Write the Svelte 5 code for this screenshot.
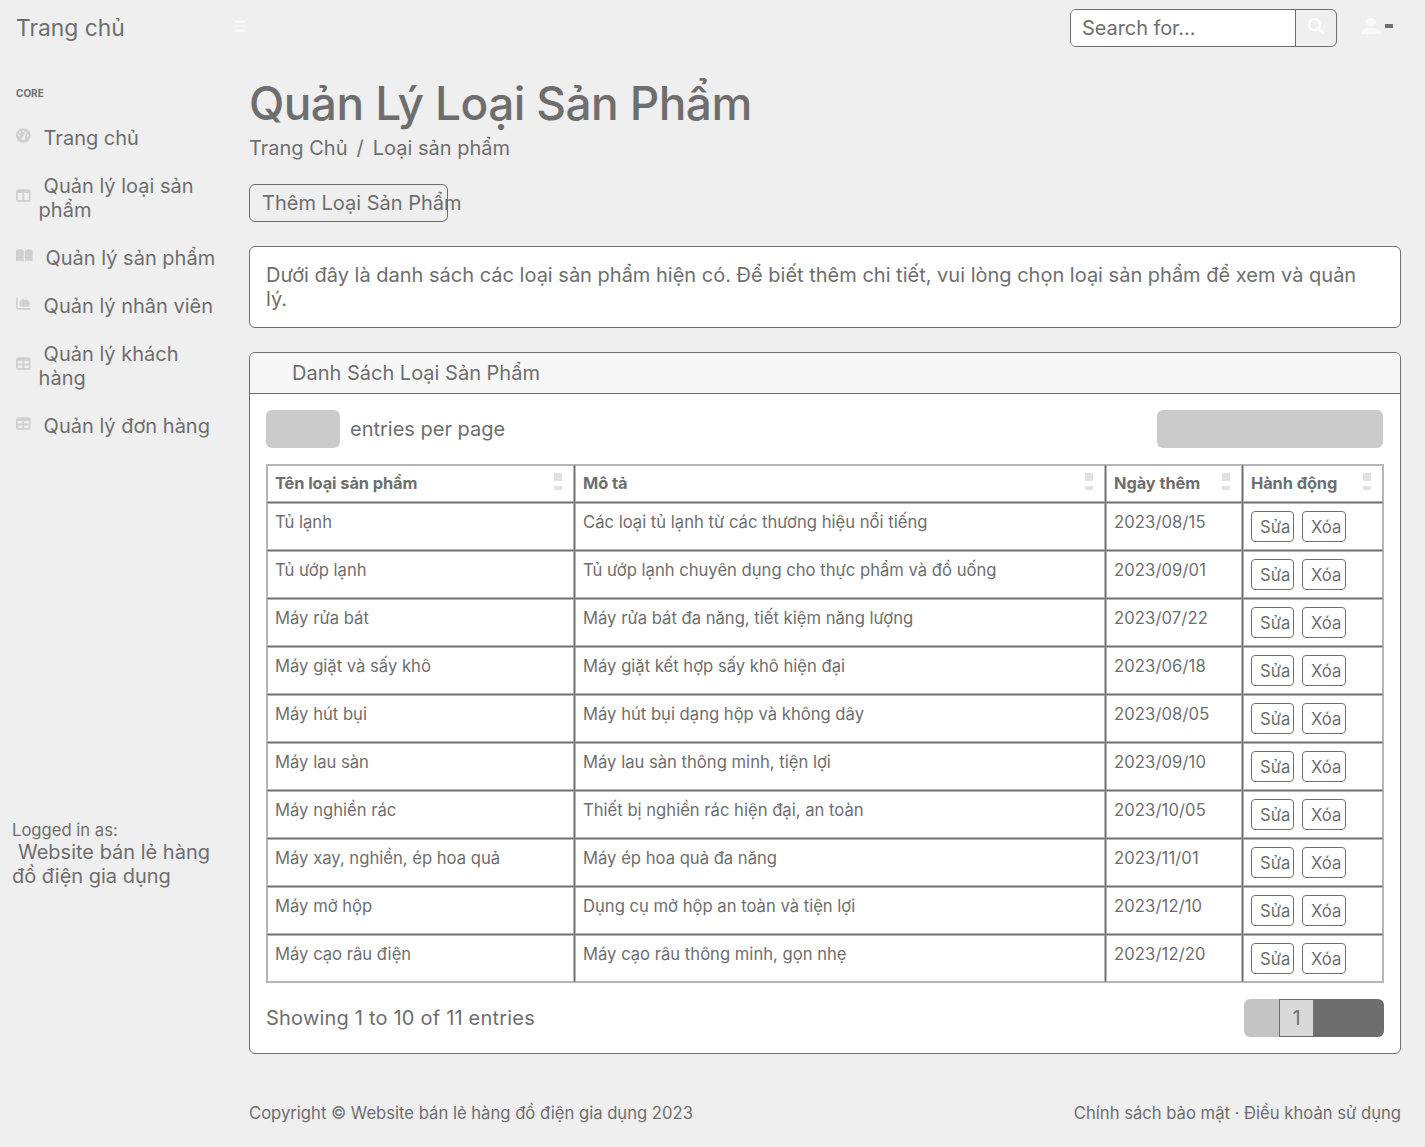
<script>
  const nav = [
    { icon: 'gauge', text: 'Trang chủ' },
    { icon: 'columns', text: 'Quản lý loại sản phẩm', tall: true },
    { icon: 'book', text: 'Quản lý sản phẩm' },
    { icon: 'area', text: 'Quản lý nhân viên' },
    { icon: 'table', text: 'Quản lý khách hàng', tall: true },
    { icon: 'table', text: 'Quản lý đơn hàng' }
  ];
  const heads = ['Tên loại sản phẩm', 'Mô tả', 'Ngày thêm', 'Hành động'];
  const rows = [
    ['Tủ lạnh', 'Các loại tủ lạnh từ các thương hiệu nổi tiếng', '2023/08/15'],
    ['Tủ ướp lạnh', 'Tủ ướp lạnh chuyên dụng cho thực phẩm và đồ uống', '2023/09/01'],
    ['Máy rửa bát', 'Máy rửa bát đa năng, tiết kiệm năng lượng', '2023/07/22'],
    ['Máy giặt và sấy khô', 'Máy giặt kết hợp sấy khô hiện đại', '2023/06/18'],
    ['Máy hút bụi', 'Máy hút bụi dạng hộp và không dây', '2023/08/05'],
    ['Máy lau sàn', 'Máy lau sàn thông minh, tiện lợi', '2023/09/10'],
    ['Máy nghiền rác', 'Thiết bị nghiền rác hiện đại, an toàn', '2023/10/05'],
    ['Máy xay, nghiền, ép hoa quả', 'Máy ép hoa quả đa năng', '2023/11/01'],
    ['Máy mở hộp', 'Dụng cụ mở hộp an toàn và tiện lợi', '2023/12/10'],
    ['Máy cạo râu điện', 'Máy cạo râu thông minh, gọn nhẹ', '2023/12/20']
  ];
</script>

<div class="page">
  <header>
    <a class="brand" href="#top">Trang chủ</a>
    <svg class="bars" viewBox="0 0 448 512"><path d="M0 96c0-18 14-32 32-32h384c18 0 32 14 32 32s-14 32-32 32H32C14 128 0 114 0 96zm0 160c0-18 14-32 32-32h384c18 0 32 14 32 32s-14 32-32 32H32c-18 0-32-14-32-32zm448 160c0 18-14 32-32 32H32c-18 0-32-14-32-32s14-32 32-32h384c18 0 32 14 32 32z" /></svg>
    <div class="search">
      <div class="field">Search for...</div>
      <div class="go"><svg viewBox="0 0 512 512"><path d="M416 208c0 45.9-14.900 88.300-40 122.700L502.600 457.400c12.500 12.500 12.500 32.800 0 45.300s-32.800 12.500-45.300 0L330.700 376c-34.400 25.200-76.800 40-122.700 40C93.100 416 0 322.900 0 208S93.100 0 208 0S416 93.100 416 208zM208 352a144 144 0 1 0 0-288 144 144 0 1 0 0 288z" /></svg></div>
    </div>
    <svg class="user" viewBox="0 0 20 16"><ellipse cx="10" cy="4" rx="5.500" ry="4" /><path d="M0 16C0 12.500 3.500 10 8 10h4c4.500 0 8 2.500 8 6z" /></svg>
    <span class="caret"></span>
  </header>

  <aside>
    <div class="core">CORE</div>
    <nav>
      {#each nav as item}
        <a class:tall={item.tall} href="#top">
          <span class="ico">
            {#if item.icon === 'gauge'}
              <svg width="14.6" height="15" viewBox="0 0 512 512"><path fill-rule="evenodd" d="M0 256a256 256 0 1 1 512 0A256 256 0 1 1 0 256zM288 96a32 32 0 1 0-64 0 32 32 0 1 0 64 0zM256 416c35.300 0 64-28.700 64-64 0-17.400-6.900-33.100-18.100-44.600L366 161.700c5.300-12.100-.2-26.300-12.300-31.600s-26.300.2-31.600 12.300L257.900 288c-.6 0-1.300 0-1.900 0-35.300 0-64 28.700-64 64s28.700 64 64 64zM176 144a32 32 0 1 0-64 0 32 32 0 1 0 64 0zM96 288a32 32 0 1 0 0-64 32 32 0 1 0 0 64zm352-32a32 32 0 1 0-64 0 32 32 0 1 0 64 0z" /></svg>
            {:else if item.icon === 'columns'}
              <svg width="14.6" height="13" viewBox="0 0 15 13"><path fill-rule="evenodd" d="M2 0h11a2 2 0 0 1 2 2v9a2 2 0 0 1-2 2H2a2 2 0 0 1-2-2V2a2 2 0 0 1 2-2zM1.800 4v7.200h4.800V4zM8.400 4v7.200h4.800V4z" /></svg>
            {:else if item.icon === 'book'}
              <svg width="16.5" height="13" viewBox="0 0 17 13"><path d="M8 1.400V13C6 11.900 3.500 11.700.8 12.400.3 12.500 0 12.200 0 11.800V1.500C0 1 .3.700.7.500 3-.2 6-.3 8 1.400zM9 1.400V13c2-1.100 4.500-1.300 7.200-.6.500.1.800-.2.800-.6V1.500c0-.5-.3-.8-.7-1C14-.2 11-.3 9 1.400z" /></svg>
            {:else if item.icon === 'area'}
              <svg width="14.6" height="13" viewBox="0 0 15 13"><path d="M0 1a.9.900 0 0 1 1.800 0v9.500c0 .4.300.7.700.7H14a.9.900 0 0 1 0 1.800H2.300A2.300 2.300 0 0 1 0 10.700zM3.700 8.700V5.500c0-.3.100-.5.300-.7l2.300-2.600c.4-.4 1-.4 1.400 0l1.200 1.100 1.300-1c.3-.2.800-.2 1.100.1l2.300 2.200c.2.200.4.500.4.800v3.300c0 .5-.4.800-.9.800H4.600c-.5 0-.9-.3-.9-.8z" /></svg>
            {:else}
              <svg width="14.6" height="13" viewBox="0 0 15 13"><path fill-rule="evenodd" d="M2 0h11a2 2 0 0 1 2 2v9a2 2 0 0 1-2 2H2a2 2 0 0 1-2-2V2a2 2 0 0 1 2-2zM1.800 4v2.500h4.800V4zM8.400 4v2.500h4.800V4zM1.800 8.500V11h4.800V8.500zM8.400 8.500V11h4.800V8.500z" /></svg>
            {/if}
          </span>
          <span class="label">{item.text}</span>
        </a>
      {/each}
    </nav>
    <div class="logged">
      <div class="small">Logged in as:</div>
      <div class="site">Website bán lẻ hàng đồ điện gia dụng</div>
    </div>
  </aside>

  <main>
    <h1>Quản Lý Loại Sản Phẩm</h1>
    <div class="crumbs"><span>Trang Chủ</span><span>/</span><span>Loại sản phẩm</span></div>
    <div class="add">Thêm Loại Sản Phẩm</div>
    <section class="box intro">Dưới đây là danh sách các loại sản phẩm hiện có. Để biết thêm chi tiết, vui lòng chọn loại sản phẩm để xem và quản lý.</section>
    <section class="box list">
      <div class="title">Danh Sách Loại Sản Phẩm</div>
      <div class="tools">
        <span class="select"></span><span class="per">entries per page</span><span class="filter"></span>
      </div>
      <div class="grid">
        {#each heads as h}
          <div class="cell head"><span>{h}</span><span class="sort"><i></i><i></i></span></div>
        {/each}
        {#each rows as r}
          <div class="cell">{r[0]}</div>
          <div class="cell">{r[1]}</div>
          <div class="cell date">{r[2]}</div>
          <div class="cell acts"><span class="btn">Sửa</span><span class="btn del">Xóa</span></div>
        {/each}
      </div>
      <div class="bottom">
        <span class="info">Showing 1 to 10 of 11 entries</span>
        <div class="pages"><span class="prev"></span><span class="cur">1</span><span class="next"></span></div>
      </div>
    </section>
    <footer><span>Copyright © Website bán lẻ hàng đồ điện gia dụng 2023</span><span>Chính sách bảo mật · Điều khoản sử dụng</span></footer>
  </main>
</div>

<style>
  :global(body) { margin: 0; background: #efefef; }
  * { box-sizing: border-box; }
  .page {
    width: 1425px; height: 1147px; overflow: hidden;
    display: grid; grid-template: 56px 1091px / 225px 1200px;
    background: #efefef; color: #6e6e6e;
    font: 400 20px/24px Inter, sans-serif;
  }
  a { color: inherit; text-decoration: none; }
  svg { display: block; }
  header { grid-column: 1 / 3; display: flex; padding-left: 16px; }
  .brand { width: 218px; font-size: 22.8px; line-height: 28px; padding-top: 14px; }
  .bars { width: 12px; height: 14px; margin-top: 19px; fill: #f9f9f9; }
  .search {
    display: flex; width: 267px; height: 38px; margin: 9px 0 0 824px;
    border: 1px solid #6e6e6e; border-radius: 6px; overflow: hidden;
  }
  .field { width: 224px; background: #fff; padding: 6px 11px; letter-spacing: -.08px; }
  .go { flex: 1; border-left: 1px solid #6e6e6e; padding: 8px 0 0 12px; }
  .go svg { width: 16px; height: 16px; fill: #fff; }
  .user { width: 20px; height: 16px; margin: 18px 0 0 24px; fill: #f9f9f9; }
  .caret { width: 8px; height: 4px; margin: 24px 0 0 4px; background: #6e6e6e; }

  aside { padding-top: 31px; }
  .core { font-size: 10px; line-height: 12px; font-weight: 700; padding-left: 16px; }
  nav { margin-top: 15px; }
  nav a { display: flex; height: 48px; align-items: center; padding-left: 16px; }
  nav a.tall { height: 72px; }
  .ico { flex: none; margin-right: 8px; padding-bottom: 5px; }
  .label { text-indent: 5px; width: 180px; }
  .ico svg { fill: #d0d0d0; }
  .logged { margin: 370px 0 0 12px; }
  .small { font-size: 16.64px; line-height: 20px; }
  .site { text-indent: 6px; width: 205px; }

  main { padding: 18px 24px 0; }
  h1 { margin: 0; font-size: 46px; line-height: 58px; font-weight: 500; letter-spacing: -.58px; }
  .crumbs { display: flex; gap: 9px; margin-top: 4px; }
  .add {
    width: 199px; height: 38px; margin-top: 24px; padding: 6px 12px;
    border: 1px solid #6e6e6e; border-radius: 6px; white-space: nowrap;
  }
  .box { background: #fff; border: 1px solid #6e6e6e; border-radius: 6px; margin-top: 24px; overflow: hidden; }
  .intro { height: 82px; padding: 16px 30px 0 16px; }
  .list { height: 702px; }
  .title { height: 41px; background: #f7f7f7; border-bottom: 1px solid #6e6e6e; padding: 8px 0 0 42px; }
  .tools { display: flex; padding: 16px; height: 70px; }
  .select { width: 74px; height: 38px; border-radius: 6px; background: #cbcbcb; }
  .per { padding: 7px 0 0 10px; }
  .filter { width: 226px; height: 38px; margin: 0 1px 0 auto; border-radius: 6px; background: #cbcbcb; }
  .grid {
    display: grid; grid-template-columns: 307px 530px 136px 140px;
    grid-template-rows: 37px; grid-auto-rows: 47px; gap: 1px;
    width: 1118px; margin-left: 16px; font-size: 16.64px; line-height: 20px;
    border: 1px solid #b6b6b6; background: #6e6e6e;
  }
  .cell { background: #fff; border: 1px solid #b6b6b6; padding: 8px 7px 0; white-space: nowrap; }
  .head { font-weight: 700; font-size: 16.4px; letter-spacing: -.08px; padding-top: 7px; display: flex; justify-content: space-between; }
  .date { letter-spacing: .1px; }
  .sort { padding-right: 4px; }
  .sort i { display: block; width: 8px; height: 8px; background: #e1e1e1; }
  .sort i + i { height: 4px; margin-top: 5px; }
  .acts { display: flex; gap: 8px; padding-top: 7px; }
  .btn { width: 43px; height: 31px; border: 1px solid #6e6e6e; border-radius: 4px; padding: 5px 0 0 8px; }
  .del { width: 44px; }
  .bottom { display: flex; justify-content: space-between; padding: 16px 16px 0; }
  .info { padding-top: 7px; letter-spacing: .2px; }
  .pages { display: flex; width: 140px; height: 38px; border-radius: 6px; overflow: hidden; }
  .prev { width: 35px; background: #c4c4c4; }
  .cur { width: 35px; background: #d9d9d9; border: 1px solid #6e6e6e; text-align: center; padding-top: 6px; }
  .next { flex: 1; background: #6e6e6e; }
  footer { display: flex; justify-content: space-between; margin-top: 49px; font-size: 16.64px; line-height: 20px; }
</style>
